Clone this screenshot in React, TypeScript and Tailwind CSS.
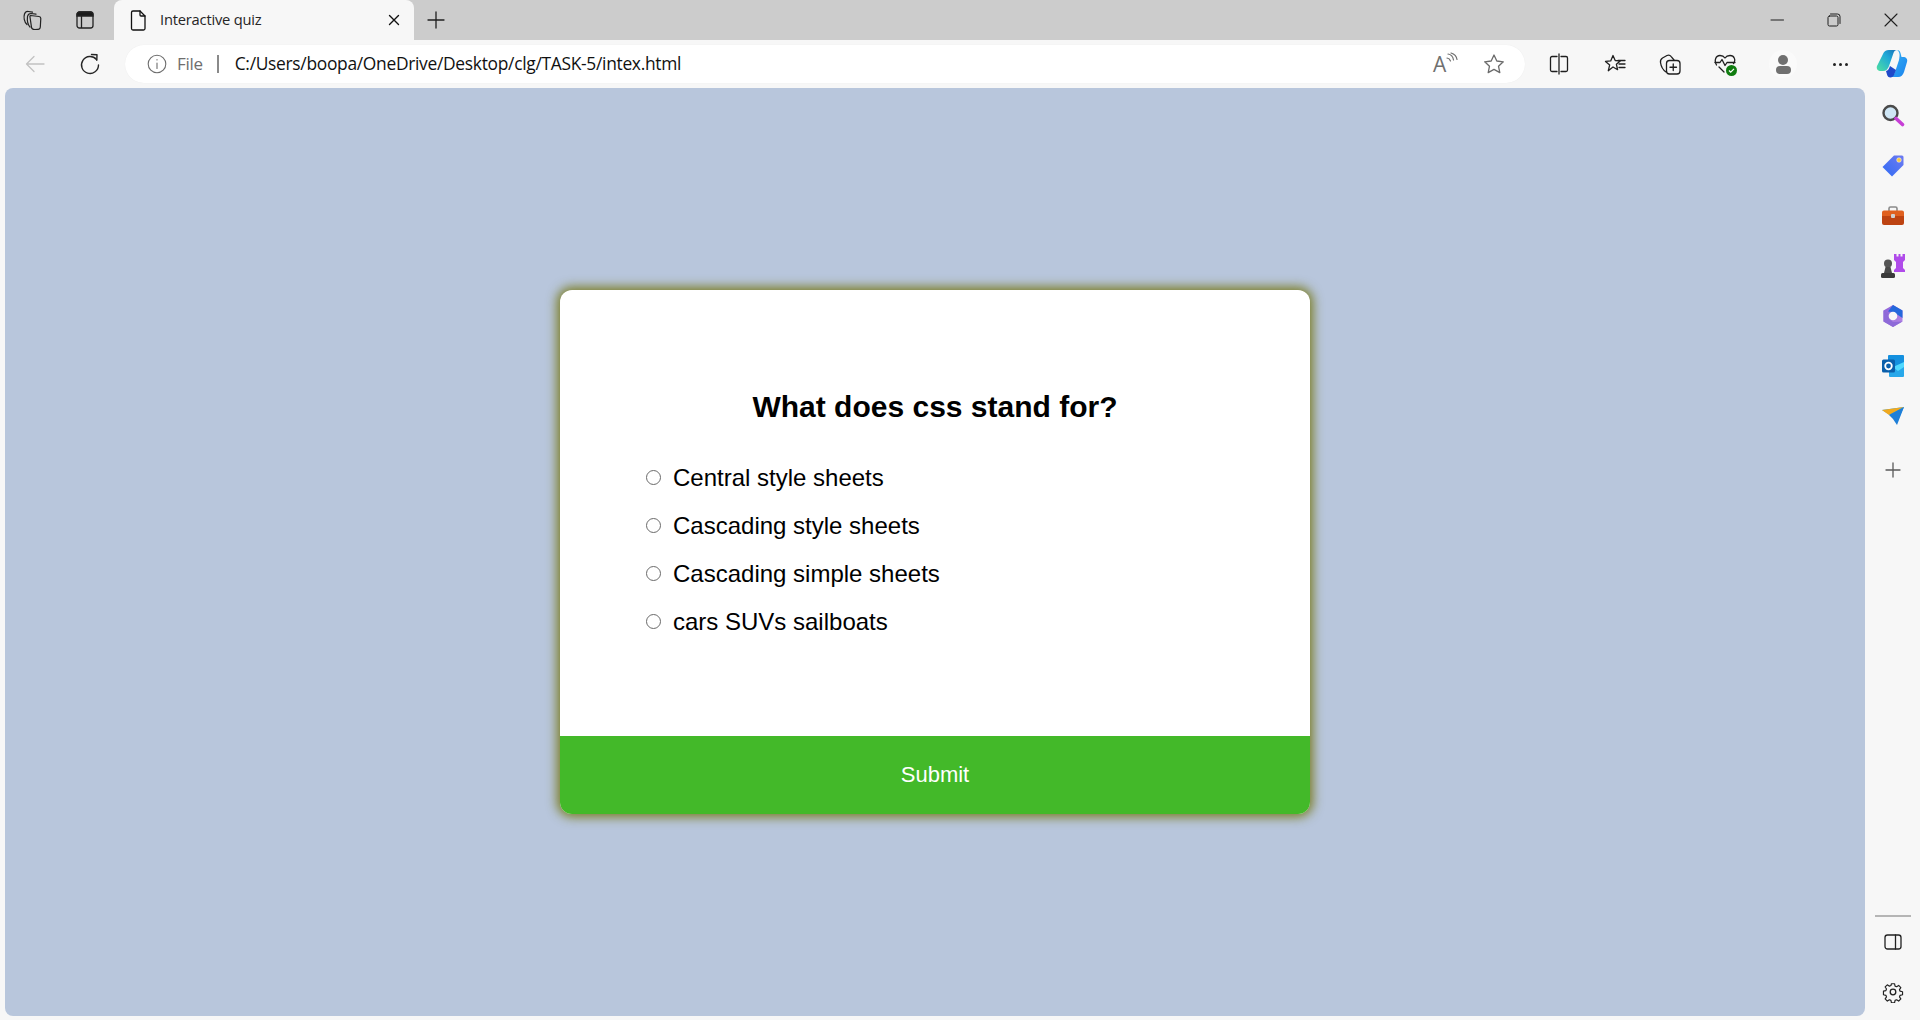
import React from "react";

const S = ({ w = 20, h = 20, vb = "0 0 20 20", c = "#1f1f1f", sw = 1.2, children }: any) => (
  <svg width={w} height={h} viewBox={vb} fill="none" stroke={c} strokeWidth={sw} strokeLinecap="round" strokeLinejoin="round">
    {children}
  </svg>
);

const Slot = ({ w, children }: any) => <div className="flex items-center justify-center shrink-0 h-full" style={{ width: w }}>{children}</div>;

const options = ["Central style sheets", "Cascading style sheets", "Cascading simple sheets", "cars SUVs sailboats"];

function SideIcon({ children, h = "h-[50px]" }: any) {
  return <div className={`flex items-center justify-center w-full ${h}`}>{children}</div>;
}

export default function App() {
  return (
    <div className="w-[1920px] h-[1020px] overflow-hidden flex flex-col bg-[#f7f7f7] font-['Liberation_Sans',Arial,sans-serif]">
      {/* tab strip */}
      <div className="h-[40px] bg-[#cccccc] flex items-end shrink-0">
        <div className="flex items-center h-[40px] w-[114px] pl-[10px]">
          <Slot w={44}>
            <S w={22} h={22} vb="0 0 22 22" c="#222" sw={1.2}>
              <path d="M9.500 6.500l8.500 1a2 2 0 0 1 1.800 2l-.5 8.500c-.1 1.500-1 2.500-2.500 2.300l-3 .2c-1.500 0-3-.7-3.300-2.200L9 8c-.2-1 0-1.500.5-1.500z" />
              <path d="M9 18C7 16 6 12 6.500 7.500 7 5 8 4.500 10 4.500l5 .6" />
              <path d="M6 15.500C3 13 2.500 8 3.500 5c.7-2 2-2.800 4-2.500l4 .7" />
            </S>
          </Slot>
          <div className="w-[9px]" />
          <Slot w={44}>
            <svg width="18" height="18" viewBox="0 0 18 18" fill="none" stroke="#222" strokeWidth="1.300">
              <rect x="1" y="1" width="16" height="16" rx="2.500" />
              <path d="M1 3.500A2.500 2.500 0 0 1 3.500 1h11A2.500 2.500 0 0 1 17 3.500V5H1z" fill="#1a1a1a" />
              <path d="M5.500 5v12" />
            </svg>
          </Slot>
        </div>
        <div className="w-[300px] h-[40px] bg-[#f7f7f7] rounded-t-[8px] flex items-center pl-[14px] pr-[13px]">
          <S w={20} h={22} vb="0 0 20 22" sw={1.3} c="#111">
            <path d="M3.500 3.500A1.500 1.500 0 0 1 5 2h7l5 5v12.500a1.500 1.500 0 0 1-1.500 1.500H5a1.500 1.500 0 0 1-1.500-1.500z" />
            <path d="M12 2v4a1 1 0 0 0 1 1h4" />
          </S>
          <span className="ml-[12px] flex-1 text-[14.7px] text-[#262626] font-['Open_Sans','Noto_Sans',sans-serif] tracking-[-0.2px] -mt-[1px]">Interactive quiz</span>
          <S w={14} h={14} vb="0 0 14 14" c="#111" sw={1.4}><path d="M2.500 2.500l9 9M11.500 2.500l-9 9" /></S>
        </div>
        <div className="h-[40px] flex items-center pl-[13px]">
          <S w={18} h={18} vb="0 0 18 18" sw={1.3}><path d="M9 1v16M1 9h16" /></S>
        </div>
        <div className="flex-1" />
        <div className="h-[40px] flex items-center">
          <Slot w={57}><S w={14} h={14} vb="0 0 14 14" sw={1}><path d="M1 7h12.500" /></S></Slot>
          <Slot w={57}>
            <S w={14} h={14} vb="0 0 14 14" sw={1}>
              <rect x="1" y="3" width="10" height="10" rx="1.500" />
              <path d="M3.500 1h7A2.500 2.500 0 0 1 13 3.500v7" />
            </S>
          </Slot>
          <Slot w={58}><S w={14} h={14} vb="0 0 14 14" sw={1.1}><path d="M1 1l12 12M13 1L1 13" /></S></Slot>
        </div>
      </div>

      {/* toolbar */}
      <div className="h-[48px] flex items-center shrink-0 bg-[#f7f7f7]">
        <div className="w-[125px] flex items-center h-full pl-[12px]">
          <Slot w={46}>
            <S w={22} h={22} vb="0 0 22 22" c="#c2c2c2" sw={1.3}><path d="M20 11H2.500M10 3.500L2.500 11l7.500 7.500" /></S>
          </Slot>
          <Slot w={64}>
            <S w={24} h={24} vb="0 0 24 24" c="#262626" sw={1.4}>
              <path d="M18.500 7.500A8.500 8.500 0 1 0 20.500 13" />
              <path d="M13.500 2.500l5.500.3-.2 5.400" />
            </S>
          </Slot>
        </div>
        <div className="w-[1400px] h-[38px] bg-white rounded-[19px] flex items-center pl-[22px] pr-[20px] shadow-[0_0_1px_rgba(0,0,0,0.08)]">
          <S w={20} h={20} vb="0 0 20 20" c="#6d6d6d" sw={1.1}>
            <circle cx="10" cy="10" r="8.800" />
            <path d="M10 9v5.500M10 5.600v.4" />
          </S>
          <span className="ml-[10px] text-[17px] text-[#6e6e6e] font-['Open_Sans','Noto_Sans',sans-serif] tracking-[-0.3px] -mt-[1px]">File</span>
          <span className="ml-[14px] w-[2px] h-[18px] bg-[#8a8a8a]" />
          <span className="ml-[16px] flex-1 text-[17.4px] text-[#111] font-['Open_Sans','Noto_Sans',sans-serif] tracking-[-0.3px] -mt-[1px]">C:/Users/boopa/OneDrive/Desktop/clg/TASK-5/intex.html</span>
          <div className="flex items-center">
            <div className="relative w-[24px] h-[24px]">
              <span className="absolute left-[0px] top-[0px] text-[21px] leading-[24px] text-[#707070] font-['Open_Sans',sans-serif]">A</span>
              <svg className="absolute -right-[2px] top-0" width="14" height="14" viewBox="0 0 14 14" fill="none" stroke="#707070" strokeWidth="1.200" strokeLinecap="round">
                <path d="M3 2c3 .5 5 2.500 5.500 6M2 6c2 .3 3 1.500 3.500 3M6 1c3.500 1 5.500 3 6 6.500" />
              </svg>
            </div>
            <div className="w-[26px]" />
            <S w={22} h={22} vb="0 0 22 22" c="#6a6a6a" sw={1.3}>
              <path d="M11 2l2.800 6 6.500.8-4.800 4.400 1.300 6.400L11 16.400 5.200 19.600l1.300-6.400L1.700 8.800 8.200 8z" />
            </S>
          </div>
        </div>
        <div className="flex items-center h-full ml-[11px]">
          <Slot w={46}>
            <S w={20} h={22} vb="0 0 20 22" c="#1f1f1f" sw={1.3}>
              <path d="M8 3.500H3A1.500 1.500 0 0 0 1.500 5v12A1.500 1.500 0 0 0 3 18.500h5M12 3.500h5A1.500 1.500 0 0 1 18.500 5v12a1.500 1.500 0 0 1-1.500 1.500h-5M10 1v20" />
            </S>
          </Slot>
          <div className="w-[5px]" />
          <Slot w={56}>
            <S w={22} h={22} vb="0 0 22 22" c="#1f1f1f" sw={1.3}>
              <path d="M9 2.500l2.200 5 5 .4-3.800 3.400 1.200 5.400L9 14 4.300 17.700l1.400-5.800L1.500 8.400 6.700 7.900z" />
              <path d="M14 7.500h7M15 11h6M15 14.500h6" />
            </S>
          </Slot>
          <Slot w={54}>
            <S w={22} h={22} vb="0 0 22 22" c="#1f1f1f" sw={1.3}>
              <rect x="7.500" y="7.500" width="13.500" height="13.500" rx="3" />
              <path d="M14.250 11v6.500M11 14.250h6.500" />
              <path d="M7 19C4 17 2 13 1.500 9.500c-.3-2 .5-3.500 2-4.500L8 2.500c1.500-.7 3-.5 4 .8L15 7" />
            </S>
          </Slot>
          <Slot w={56}>
            <div className="relative w-[22px] h-[22px]">
              <S w={22} h={22} vb="0 0 22 22" c="#1f1f1f" sw={1.3}>
                <path d="M2.500 12C0 8 1.500 2.500 6 2.500c2.500 0 4 1 5 2.500 1-1.500 2.500-2.500 5-2.500 4.500 0 6 5 3.500 8" />
                <path d="M1 9.500h5l2-3 3 6 2-3h8M5 14l5 5" />
              </S>
              <div className="absolute -right-[1px] -bottom-[1px] w-[11px] h-[11px] rounded-full bg-[#107c10] flex items-center justify-center">
                <svg width="7" height="7" viewBox="0 0 7 7" fill="none" stroke="#fff" strokeWidth="1.200"><path d="M1 3.500l1.700 1.700L6 1.800" /></svg>
              </div>
            </div>
          </Slot>
          <Slot w={60}>
            <div className="w-[28px] h-[28px] rounded-full bg-[#fafafa] flex flex-col items-center justify-center gap-[1px]">
              <div className="w-[10px] h-[10px] rounded-full bg-[#707070]" />
              <div className="w-[15px] h-[8px] rounded-[4px] bg-[#707070]" />
            </div>
          </Slot>
          <Slot w={54}>
            <div className="flex gap-[3px]">
              <span className="w-[3px] h-[3px] rounded-full bg-[#222]" />
              <span className="w-[3px] h-[3px] rounded-full bg-[#222]" />
              <span className="w-[3px] h-[3px] rounded-full bg-[#222]" />
            </div>
          </Slot>
          <Slot w={50}>
            <svg width="32" height="28" viewBox="0 0 32 28">
              <defs>
                <linearGradient id="cpA" x1="0" y1="1" x2="1" y2="0"><stop offset="0" stopColor="#4fe0a0" /><stop offset=".6" stopColor="#1fa9d8" /><stop offset="1" stopColor="#1a6fb5" /></linearGradient>
                <linearGradient id="cpB" x1="0" y1="0" x2="1" y2="1"><stop offset="0" stopColor="#35b7f3" /><stop offset="1" stopColor="#1c82ee" /></linearGradient>
              </defs>
              <path d="M7 4C8 1.500 10 0 13 0h8c-1.500 0-3 1-3.500 3L13 16c-1 3-3 5-6 5H5C2 21 0 19 1 16z" fill="url(#cpA)" />
              <path d="M21 0c2 0 3 1 3.500 3l1 4H27c3 0 5 2 4 5l-3 10c-1 3-3 5-6 5h-9c3 0 5-2 6-5l4-12C24 5 24 2 21 0z" fill="url(#cpB)" />
              <path d="M10 21c2-.5 3-2 4-5l6 4-2 5c-.6 1.500-2 2.500-3.500 2.500-2 0-3-1-3.500-3z" fill="#1f49c9" />
            </svg>
          </Slot>
        </div>
      </div>

      {/* content row */}
      <div className="flex-1 flex min-h-0">
        <div className="flex-1 flex flex-col pl-[5px] pb-[4px]">
          <div className="flex-1 bg-[#b8c6dc] rounded-[8px] flex items-center justify-center">
            <div className="w-[750px] h-[524px] bg-white rounded-[12px] overflow-hidden flex flex-col shadow-[0_0_11px_3px_rgba(110,110,0,0.85)]">
              <div className="flex-1 pt-[97px] pl-[87px]">
                <h2 className="text-[30px] leading-[40px] font-bold text-black text-center pr-[87px]">What does css stand for?</h2>
                <ul className="mt-[27px] flex flex-col">
                  {options.map((o) => (
                    <li key={o} className="h-[48px] flex items-center text-[24px] text-black">
                      <span className="w-[15px] h-[15px] rounded-full border-[1.5px] border-[#6a6a6a] bg-white mr-[11px] -mt-[1px] -ml-[1px]" />
                      <span className="ml-[1px]">{o}</span>
                    </li>
                  ))}
                </ul>
              </div>
              <button className="h-[78px] pb-[2px] bg-[#43b929] text-white text-[22px] w-full">Submit</button>
            </div>
          </div>
        </div>
        {/* sidebar */}
        <div className="w-[55px] flex flex-col items-center shrink-0">
          <div className="h-[3px]" />
          <SideIcon>
            <svg width="24" height="24" viewBox="0 0 24 24" fill="none">
              <circle cx="9.500" cy="9" r="7" fill="#cfe6f5" stroke="#4a4a4a" strokeWidth="2.400" />
              <path d="M15 14.500l6.500 6" stroke="#c73fd6" strokeWidth="3.600" strokeLinecap="round" />
            </svg>
          </SideIcon>
          <SideIcon>
            <svg width="24" height="24" viewBox="0 0 24 24">
              <defs>
                <linearGradient id="tag" x1="0" y1="1" x2="1" y2="0"><stop offset="0" stopColor="#2f6bf5" /><stop offset="1" stopColor="#6f7bf0" /></linearGradient>
              </defs>
              <path d="M13 1.500h8a1.500 1.500 0 0 1 1.500 1.500v8L11 22.500 1.500 13z" fill="url(#tag)" />
              <circle cx="18" cy="6" r="2.300" fill="#f6c945" stroke="#fff" strokeWidth=".5" />
            </svg>
          </SideIcon>
          <SideIcon>
            <svg width="24" height="24" viewBox="0 0 24 24" fill="none">
              <path d="M8 7V4.500A1.500 1.500 0 0 1 9.500 3h5A1.500 1.500 0 0 1 16 4.500V7" stroke="#8a8a8a" strokeWidth="1.600" />
              <path d="M1 8.500A2 2 0 0 1 3 6.500h18a2 2 0 0 1 2 2V12H1z" fill="#e0601f" />
              <path d="M1 12h22v7a2 2 0 0 1-2 2H3a2 2 0 0 1-2-2z" fill="#bd4312" />
              <rect x="10" y="10" width="4" height="4" rx="1" fill="#d0d0d0" />
            </svg>
          </SideIcon>
          <SideIcon>
            <svg width="24" height="24" viewBox="0 0 24 24">
              <path d="M13 0h2.500v2.500h2V0h2v2.500h2V0H24v6l-2 2v6l2 2v2H13v-2l2-2V8l-2-2z" fill="#b04bea" />
              <circle cx="7" cy="9.500" r="4" fill="#555" />
              <path d="M4.500 13h5l1.500 6H3z" fill="#4a4a4a" />
              <rect x="0" y="19" width="14" height="5" rx="1.500" fill="#3a3a3a" />
            </svg>
          </SideIcon>
          <SideIcon>
            <svg width="24" height="24" viewBox="0 0 24 24">
              <defs>
                <linearGradient id="m1" x1="0" y1="0" x2="1" y2="1"><stop offset="0" stopColor="#8a5fd8" /><stop offset="1" stopColor="#b98ae6" /></linearGradient>
              </defs>
              <path d="M12 1l9.500 5.500v11L12 23l-9.500-5.500v-11z" fill="url(#m1)" />
              <path d="M12 1l9.500 5.500V14l-6-4-3.500-2L7 7.500z" fill="#2468dc" />
              <path d="M2.500 6.500L7 9l1 6 4 3 9.500-.5L12 23l-9.500-5.500z" fill="#8e6ad8" />
              <circle cx="12" cy="12" r="4.300" fill="#f7f7f7" />
            </svg>
          </SideIcon>
          <SideIcon>
            <svg width="24" height="24" viewBox="0 0 24 24">
              <rect x="7" y="1" width="16" height="11" rx="1" fill="#1490df" />
              <path d="M8 12h15v10a1 1 0 0 1-1 1H9a1 1 0 0 1-1-1z" fill="#28a8ea" />
              <path d="M12 13l11-5v5l-6 4z" fill="#50d9ff" />
              <rect x="1" y="5.500" width="13" height="13" rx="1.500" fill="#0a5fab" />
              <circle cx="7.500" cy="12" r="3.300" fill="none" stroke="#fff" strokeWidth="1.800" />
            </svg>
          </SideIcon>
          <SideIcon>
            <svg width="24" height="20" viewBox="0 0 24 20">
              <path d="M1 4l22-3-6 13z" fill="#29a3ea" />
              <path d="M1 4l7 5L23 1z" fill="#f0a91e" />
              <path d="M8 9l15-8-7 18-4-6z" fill="#1e7fd8" />
            </svg>
          </SideIcon>
          <div className="h-[4px]" />
          <SideIcon>
            <S w={16} h={16} vb="0 0 16 16" c="#5a5a5a" sw={1.3}><path d="M8 1v14M1 8h14" /></S>
          </SideIcon>
          <div className="flex-1" />
          <div className="w-[36px] h-[2px] bg-[#b5b5b5]" />
          <SideIcon h="h-[50px]">
            <S w={20} h={20} vb="0 0 20 20" c="#222" sw={1.3}>
              <rect x="2" y="3" width="16" height="14" rx="2.500" />
              <path d="M12.500 3v14" />
            </S>
          </SideIcon>
          <SideIcon h="h-[50px]">
            <S w={22} h={22} vb="0 0 22 22" c="#222" sw={1.3}>
              <circle cx="11" cy="11" r="2.800" />
              <path d="M9.300 1.800h3.400l.6 2.700 1.700.7 2.300-1.500 2.400 2.400-1.500 2.300.7 1.700 2.700.6v3.400l-2.700.6-.7 1.700 1.500 2.300-2.400 2.400-2.300-1.500-1.700.7-.6 2.700H9.300l-.6-2.700-1.700-.7-2.300 1.500-2.400-2.400 1.500-2.300-.7-1.700-2.700-.6V10l2.700-.6.700-1.700-1.500-2.300 2.400-2.400L7 4.500l1.700-.7z" transform="translate(1.100 1.100) scale(.9)" />
            </S>
          </SideIcon>
          <div className="h-[3px]" />
        </div>
      </div>
    </div>
  );
}
